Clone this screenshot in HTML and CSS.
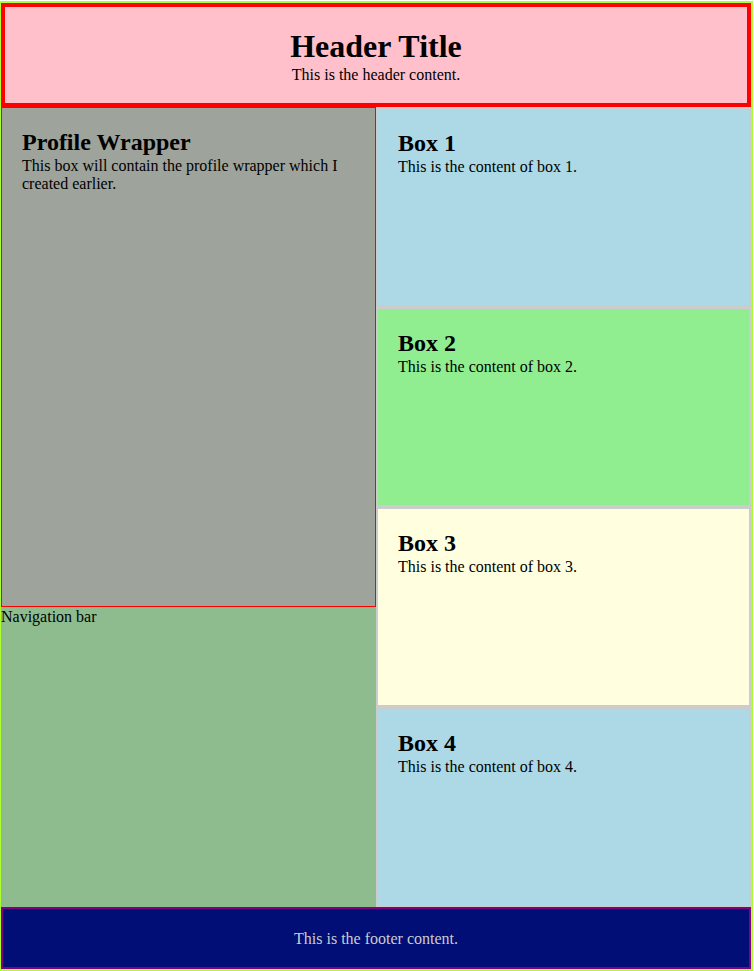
FILE: index.html
```
<!DOCTYPE html>
<html lang="en">
<head>
<meta charset="utf-8">
<title>Header Title</title>
<link rel="stylesheet" href="styles.css">
</head>
<body>
<div class="wrapper">
  <header class="header">
    <h1>Header Title</h1>
    <p>This is the header content.</p>
  </header>
  <main class="content">
    <div class="column">
      <section class="profile">
        <h2>Profile Wrapper</h2>
        <p>This box will contain the profile wrapper which I created earlier.</p>
      </section>
      <nav class="nav">Navigation bar</nav>
    </div>
    <div class="column boxes">
      <section class="box blue"><h2>Box 1</h2><p>This is the content of box 1.</p></section>
      <section class="box green"><h2>Box 2</h2><p>This is the content of box 2.</p></section>
      <section class="box yellow"><h2>Box 3</h2><p>This is the content of box 3.</p></section>
      <section class="box blue"><h2>Box 4</h2><p>This is the content of box 4.</p></section>
    </div>
  </main>
  <footer class="footer"><p>This is the footer content.</p></footer>
</div>
</body>
</html>
```
FILE: styles.css
```
* {
  box-sizing: border-box;
  margin: 0;
  padding: 0;
}

body {
  padding: 1px 1px 0 0;
  background: white;
  color: black;
  font: 16px/18px "Liberation Serif", "Times New Roman", serif;
}

.wrapper {
  border: 2px solid greenyellow;
  border-left-width: 1px;
}

.header {
  padding: 20px 20px 19px;
  border: 4px solid red;
  background: pink;
  text-align: center;
}

h1 {
  font-size: 32px;
  line-height: 38px;
}

h2 {
  font-size: 24px;
  line-height: 28px;
}

p {
  padding-top: 1px;
}

.content {
  display: grid;
  grid-template-columns: 1fr 1fr;
}

.column {
  display: flex;
  flex-direction: column;
}

.profile {
  min-height: 500px;
  padding: 20px;
  border: 1px solid red;
  background: #9ea49c;
}

.nav {
  flex: 1;
  padding-top: 1px;
  background: #8fbc8f;
}

.box {
  min-height: 200px;
  padding: 20px;
  border: 2px solid #ccc;
}

.blue {
  background: lightblue;
}

.green {
  background: lightgreen;
}

.yellow {
  background: lightyellow;
}

.footer {
  padding: 20px 20px 19px;
  border: 2px solid purple;
  background: #000e75;
  color: #ccc;
  text-align: center;
}
```
